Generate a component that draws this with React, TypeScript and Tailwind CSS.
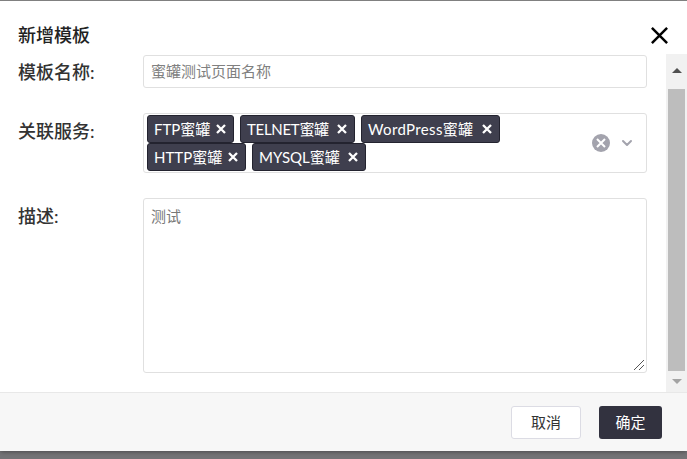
import { ChevronDown } from 'lucide-react';

const font = { fontFamily: 'Lato, "Noto Sans CJK SC", sans-serif' };

const rows = [
  [
    { label: 'FTP蜜罐', cls: 'w-[87px]' },
    { label: 'TELNET蜜罐', cls: 'w-[115px] tracking-[-0.3px]' },
    { label: 'WordPress蜜罐', cls: 'w-[139px] tracking-[0.35px]' },
  ],
  [
    { label: 'HTTP蜜罐', cls: 'w-[99px]' },
    { label: 'MYSQL蜜罐', cls: 'w-[114px]' },
  ],
];

const Cross = ({ size, width, className }: { size: number; width: number; className?: string }) => (
  <svg className={className} width={size} height={size} viewBox="0 0 20 20" fill="none" stroke="currentColor" strokeWidth={width}>
    <path d="M2 2 L18 18 M18 2 L2 18" />
  </svg>
);

const Tag = ({ label, cls }: { label: string; cls: string }) => (
  <div className={`flex h-[28px] items-center justify-between rounded-[3px] border border-[#23232f] bg-[#3f3f4e] pl-[6px] pr-[7px] text-[15px] text-white ${cls}`}>
    <span>{label}</span>
    <Cross size={10} width={4.6} />
  </div>
);

export default function App() {
  return (
    <div className="h-[459px] w-[687px] overflow-hidden bg-[#737376]" style={font}>
      <div className="flex h-[451px] flex-col rounded-b-[3px] border-t border-[#808080] bg-white shadow-[0_1px_4px_rgba(0,0,0,0.35)]">
        <div className="flex h-[53px] shrink-0 items-end justify-between pb-[7px] pl-[18px] pr-[18px]">
          <h2 className="text-[18px] font-medium leading-[24px] text-[#222]">新增模板</h2>
          <Cross size={19} width={2.6} className="mb-[2px] text-black" />
        </div>
        <div className="flex h-[338px] shrink-0">
          <div className="w-[666px] pl-[18px] pr-[19px] pt-[1px]">
            <div className="flex">
              <label className="h-[33px] w-[125px] text-[18px] font-medium leading-[34px] text-[#333]">模板名称:</label>
              <div className="flex h-[33px] flex-1 items-center rounded-[3px] border border-[#e0e0e0] px-[7px] text-[15px] text-[#808080]">
                蜜罐测试页面名称
              </div>
            </div>
            <div className="mt-[25px] flex">
              <label className="w-[125px] text-[18px] font-medium leading-[36px] text-[#333]">关联服务:</label>
              <div className="flex h-[60px] flex-1 items-center rounded-[3px] border border-[#e0e0e0] pl-[3px] pr-[11px]">
                <div className="flex flex-1 flex-col">
                  {rows.map((row, i) => (
                    <div key={i} className="flex gap-[6px]">
                      {row.map((t) => (
                        <Tag key={t.label} label={t.label} cls={t.cls} />
                      ))}
                    </div>
                  ))}
                </div>
                <div className="flex h-[18px] w-[18px] items-center justify-center rounded-full bg-[#a3a3ad] text-white">
                  <Cross size={10} width={4} />
                </div>
                <ChevronDown className="ml-[9px] h-[16px] w-[16px] text-[#a3a3ad]" strokeWidth={3} />
              </div>
            </div>
            <div className="mt-[25px] flex">
              <label className="w-[125px] text-[18px] font-medium leading-[36px] text-[#333]">描述:</label>
              <div className="relative h-[175px] flex-1 rounded-[3px] border border-[#e0e0e0] px-[7px] py-[6px] text-[15px] leading-[22px] text-[#777]">
                测试
                <svg className="absolute bottom-[1px] right-[1px]" width="12" height="12" viewBox="0 0 12 12">
                  <path d="M1 11 L11 1 M6 11 L11 6" stroke="#555" strokeWidth="1" />
                </svg>
              </div>
            </div>
          </div>
          <div className="flex w-[21px] flex-col items-center bg-[#f1f1f1]">
            <div className="flex h-[35px] w-full items-center justify-center pb-[2px]">
              <div className="h-0 w-0 border-x-[5px] border-b-[5px] border-x-transparent border-b-[#505050]" />
            </div>
            <div className="h-[282px] w-[17px] bg-[#bdbdbd]" />
            <div className="flex h-[21px] w-full items-center justify-center">
              <div className="h-0 w-0 border-x-[5px] border-t-[5px] border-x-transparent border-t-[#a3a3a3]" />
            </div>
          </div>
        </div>
        <div className="flex flex-1 items-start justify-end gap-[18px] border-t border-[#e8e8e8] bg-[#f7f7f7] pr-[25px] pt-[13px]">
          <button className="h-[33px] w-[70px] rounded-[3px] border border-[#dcdce4] bg-white text-[15px] text-[#333]">取消</button>
          <button className="h-[33px] w-[63px] rounded-[3px] bg-[#32323f] text-[15px] text-white">确定</button>
        </div>
      </div>
    </div>
  );
}
